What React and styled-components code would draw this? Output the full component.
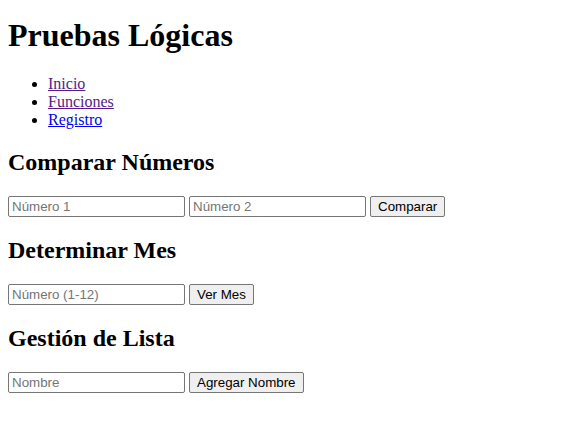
import React from 'react';
import styled, { createGlobalStyle } from 'styled-components';

const GlobalStyle = createGlobalStyle`
  body {
    margin: 0;
    padding: 8px;
    font-family: "Liberation Serif", "Times New Roman", serif;
    font-size: 16px;
    color: #000;
    background: #fff;
  }
`;

const Title = styled.h1`
  font-size: 2em;
  font-weight: bold;
  margin: 9px 0 0.67em;
`;

const NavList = styled.ul`
  margin: 1em 0;
  padding-left: 40px;
  list-style: disc;
`;

const NavLink = styled.a`
  color: ${({ $visited }) => ($visited ? '#551a8b' : '#0000ee')};
  text-decoration: underline;
`;

const SectionTitle = styled.h2`
  font-size: 1.5em;
  font-weight: bold;
  margin: 0.83em 0;
`;

const Row = styled.div`
  margin: 1em 0;
`;

const Field = styled.input`
  font-family: "Liberation Sans", Arial, sans-serif;
  font-size: 13.333px;
  width: 177px;
  box-sizing: border-box;
  padding: 2px 3px;
  border: 1px solid #767676;
  border-radius: 2px;
  background: #fff;
  color: #000;
  margin: 0;

  &::placeholder {
    color: #757575;
  }
`;

const Button = styled.button`
  font-family: "Liberation Sans", Arial, sans-serif;
  font-size: 13.333px;
  padding: 2px 7px;
  border: 1px solid #767676;
  border-radius: 2px;
  background: #efefef;
  color: #000;
  margin: 0;
`;

export default function App() {
  return (
    <>
      <GlobalStyle />
      <Title>Pruebas Lógicas</Title>
      <NavList>
        <li><NavLink href="#inicio" $visited>Inicio</NavLink></li>
        <li><NavLink href="#funciones" $visited>Funciones</NavLink></li>
        <li><NavLink href="#registro">Registro</NavLink></li>
      </NavList>

      <SectionTitle>Comparar Números</SectionTitle>
      <Row>
        <Field type="number" placeholder="Número 1" />{' '}
        <Field type="number" placeholder="Número 2" />{' '}
        <Button>Comparar</Button>
      </Row>

      <SectionTitle>Determinar Mes</SectionTitle>
      <Row>
        <Field type="number" placeholder="Número (1-12)" />{' '}
        <Button>Ver Mes</Button>
      </Row>

      <SectionTitle>Gestión de Lista</SectionTitle>
      <Row>
        <Field type="text" placeholder="Nombre" />{' '}
        <Button>Agregar Nombre</Button>
      </Row>
    </>
  );
}
